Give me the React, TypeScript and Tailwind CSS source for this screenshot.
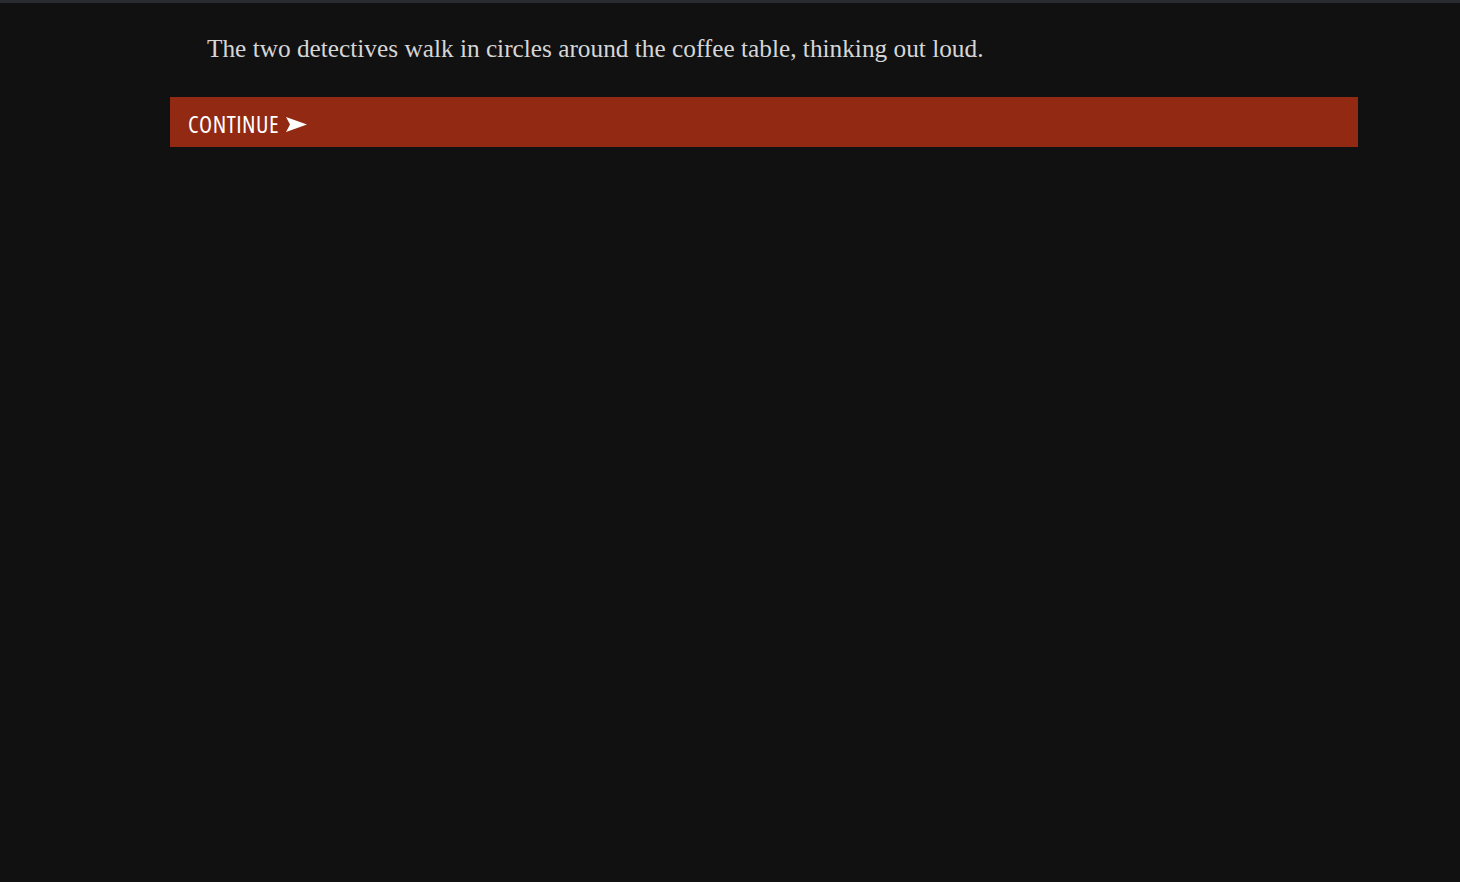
import React from 'react'

export default function App() {
  return (
    <div className="min-h-[882px] w-full bg-[#111111] border-t-[3px] border-[#2a2a31]">
      <div className="ml-[170px] mr-[102px] pt-[28px]">
        <p className="pl-[37px] text-[25.3px] leading-[34px] text-[#d6d6d6] font-['Liberation_Serif','DejaVu_Serif',serif]">
          The two detectives walk in circles around the coffee table, thinking out loud.
        </p>
        <button className="mt-[32px] flex h-[50px] w-full items-center bg-[#922913] pl-[18px] pt-[4px] text-left text-white">
          <span className="text-[24px] leading-none tracking-[0.5px] font-['Open_Sans','DejaVu_Sans_Condensed',sans-serif] [font-stretch:75%]">
            CONTINUE
          </span>
          <svg className="ml-[7px]" width="21" height="15" viewBox="0 0 21 15">
            <path d="M0 0 L21 7.5 L0 15 L4 7.5 Z" fill="#ffffff" />
          </svg>
        </button>
      </div>
    </div>
  )
}
